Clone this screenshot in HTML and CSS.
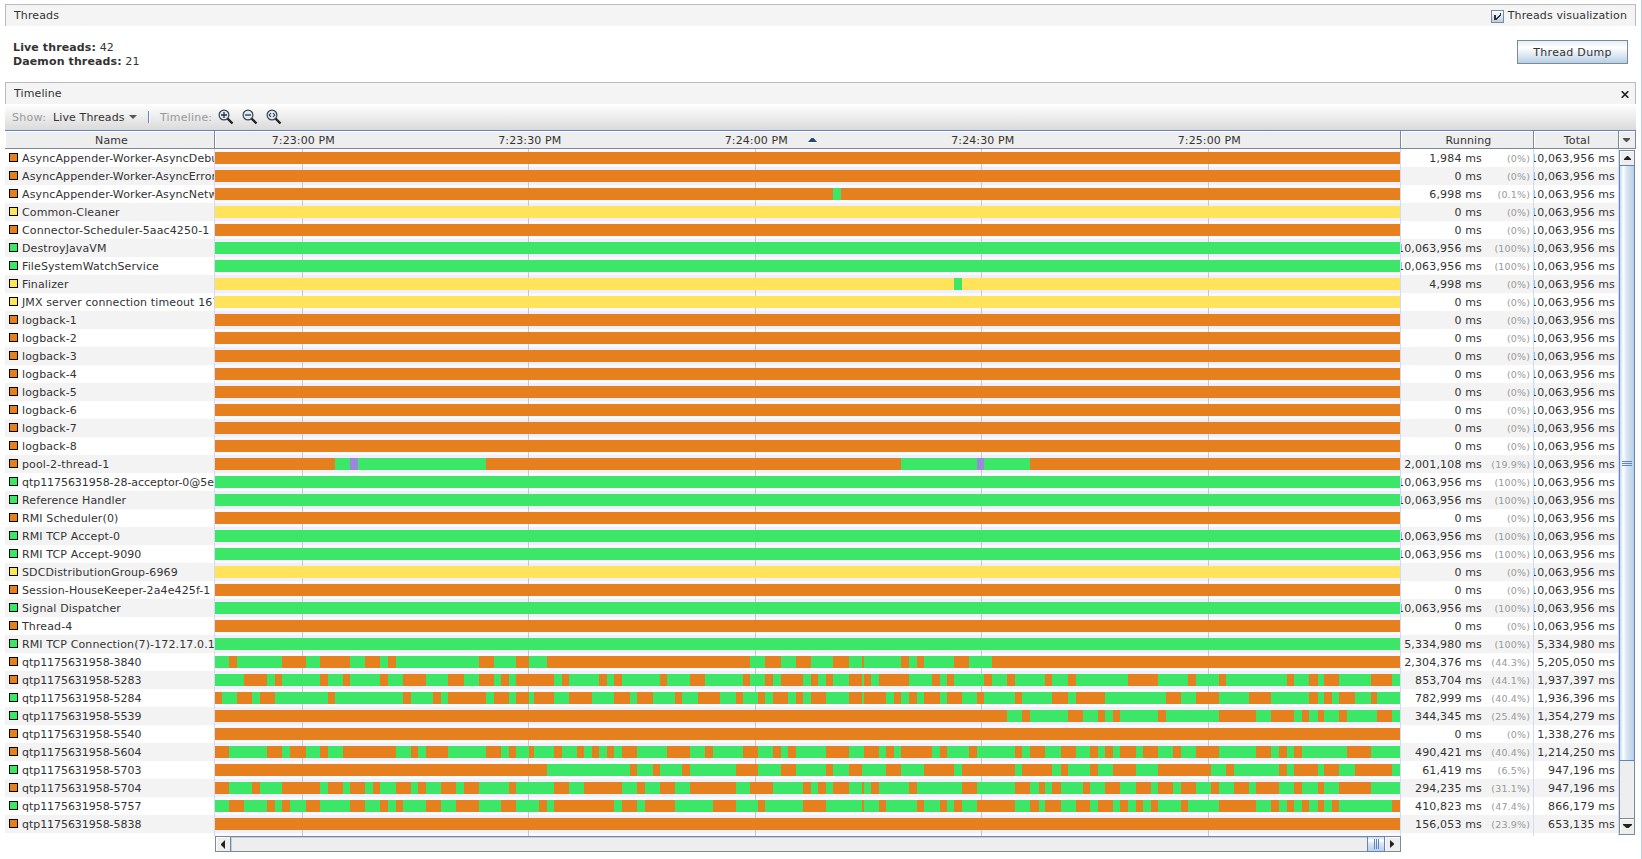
FILE: index.html
```
<!DOCTYPE html>
<html lang="en">
<head>
<meta charset="utf-8">
<title>Threads</title>
<link rel="stylesheet" href="styles.css">
</head>
<body>
<main class="app">
  <header class="bar">
    <span>Threads</span>
    <label class="check"><span class="box"><svg width="13" height="13" viewBox="0 0 13 13" shape-rendering="crispEdges"><path d="M3 5h2v5H3zM5 8h1v2H5zM6 7h1v2H6zM7 6h1v2H7zM8 5h1v2H8zM9 4h1v2H9zM9 3h1v1H9z" fill="#333"/></svg></span><span class="checktext">Threads visualization</span></label>
  </header>
  <section class="summary">
    <div class="stats"><div><b>Live threads:</b> 42</div><div><b>Daemon threads:</b> 21</div></div>
    <button class="dump">Thread Dump</button>
  </section>
  <header class="bar">
    <span>Timeline</span>
    <svg class="close" width="8" height="7" viewBox="0 0 8 7"><path d="M.7.2 7.3 6.800M7.300.2.7 6.800" stroke="#222" stroke-width="1.6"/></svg>
  </header>
  <div class="toolbar">
    <span class="dim show">Show:</span>
    <span class="live">Live Threads</span>
    <svg class="drop" width="8" height="4" viewBox="0 0 8 4"><path d="M0 0h8L4 4z" fill="#555"/></svg>
    <i class="divider"></i>
    <span class="dim tl">Timeline:</span>
    <svg class="lens" width="16" height="16" viewBox="0 0 16 16"><path d="m9.500 9.500 5 5" stroke="#222" stroke-width="2.4"/><circle cx="6" cy="6" r="4.900" fill="#dcebf8" stroke="#3c434b" stroke-width="1.2"/><path d="M3 6h6M6 3v6" stroke="#234" stroke-width="1.3"/></svg>
    <svg class="lens" width="16" height="16" viewBox="0 0 16 16"><path d="m9.500 9.500 5 5" stroke="#222" stroke-width="2.4"/><circle cx="6" cy="6" r="4.900" fill="#dcebf8" stroke="#3c434b" stroke-width="1.2"/><path d="M3 6h6" stroke="#234" stroke-width="1.3"/></svg>
    <svg class="lens" width="16" height="16" viewBox="0 0 16 16"><path d="m9.500 9.500 5 5" stroke="#222" stroke-width="2.4"/><circle cx="6" cy="6" r="4.900" fill="#dcebf8" stroke="#3c434b" stroke-width="1.2"/><path d="M5 4 3.200 6 5 8M7 4 8.800 6 7 8" fill="none" stroke="#234" stroke-width="1.100"/></svg>
  </div>
  <div class="table">
    <div class="main">
      <div class="head">
        <div class="th name-h">Name</div>
        <div class="th times"><span>7:23:00 PM</span><span>7:23:30 PM</span><span>7:24:00 PM</span><span>7:24:30 PM</span><span>7:25:00 PM</span><svg class="sort" width="9" height="5" viewBox="0 0 9 5"><path d="M0 4h9L5.500 0h-2z" fill="#234a6c"/><path d="M0 4.500h9" stroke="#fff"/></svg></div>
        <div class="th running-h">Running</div>
        <div class="th total-h">Total</div>
      </div>
      <div id="rows"></div>
      <div class="tail"><i></i><i></i><i></i><i></i></div>
    </div>
    <div class="side">
      <div class="corner"><svg width="7" height="4" viewBox="0 0 7 4"><path d="M0 0h7v1L4 4H3L0 1z" fill="#555"/></svg></div>
      <div class="vscroll">
        <div class="vbtn"><svg width="7" height="4" viewBox="0 0 7 4"><path d="M0 4h7V3L4 0H3L0 3z" fill="#222"/></svg></div>
        <div class="vthumb"><i></i><i></i><i></i></div>
        <div class="vtrack"></div>
        <div class="vbtn end"><svg width="9" height="4" viewBox="0 0 9 4"><path d="M0 0h9v1L5.500 4h-2L0 1z" fill="#222"/></svg></div>
      </div>
    </div>
  </div>
  <div class="hscroll">
    <div class="hbtn"><svg width="4" height="9" viewBox="0 0 4 9"><path d="M4 0v9L0 5V4z" fill="#222"/></svg></div>
    <div class="htrack"></div>
    <div class="hthumb"><i></i><i></i><i></i></div>
    <div class="hbtn right"><svg width="4" height="8" viewBox="0 0 4 8"><path d="M0 0v8l4-3.500v-1z" fill="#222"/></svg></div>
  </div>
</main>
<script src="threads.js"></script>
</body>
</html>
```

FILE: styles.css
```
* { box-sizing: border-box; }
body { margin: 0; background: #fff; color: #333; font: 11px/14px "DejaVu Sans", sans-serif; letter-spacing: .12px; }
.app { width: 1642px; height: 859px; padding: 4px 5px 0; border-right: 1px solid #b8cfe5; display: flex; flex-direction: column; overflow: hidden; white-space: nowrap; }
.bar { width: 1631px; height: 22px; flex: none; background: #f4f4f4; border: 1px solid #bbb; border-bottom: 0; display: flex; justify-content: space-between; align-items: center; padding: 1px 8px 0; }
.check { display: flex; align-items: center; gap: 4px; }
.checktext { letter-spacing: .14px; }
.box { width: 13px; height: 13px; border: 1px solid #7a8a99; background: linear-gradient(#fff, #b8cfe5); display: flex; }
.box svg { margin: -1px; flex: none; }
.summary { width: 1631px; height: 56px; flex: none; display: flex; justify-content: space-between; padding: 14px 8px 0 8px; }
.stats { padding-top: 1px; }
.dump { width: 111px; height: 24px; padding: 2px 0 0; border: 1px solid #7a8a99; background: linear-gradient(#e4edf6, #fff 30%, #b8cfe5); font: inherit; color: #333; letter-spacing: .3px; }
.close { margin-right: -2px; }
.toolbar { width: 1631px; height: 26px; flex: none; background: linear-gradient(#fff, #dadada); display: flex; align-items: center; padding-left: 7px; }
.toolbar span { padding-top: 1px; }
.dim { color: #999; }
.show { width: 41px; letter-spacing: .3px; }
.live { width: 76px; letter-spacing: .12px; }
.drop { width: 8px; }
.divider { width: 2px; height: 12px; border-left: 1px solid #6382bf; border-right: 1px solid #fff; margin: 0 10px 0 11px; }
.tl { width: 58px; letter-spacing: .2px; }
.lens { margin-right: 8px; }
.table { width: 1631px; height: 706px; flex: none; border-top: 1px solid #6382bf; display: flex; }
.main { width: 1614px; }
.head, .row, .tail { display: grid; grid-template-columns: 210px 1186px 133px 85px; }
.head { height: 18px; }
.th { background: #eee; border-right: 1px solid #7a8a99; border-bottom: 1px solid #7a8a99; box-shadow: inset 1px 1px #fff; text-align: center; line-height: 18px; padding-top: 1px; height: 18px; }
.name-h { padding-left: 4px; }
.running-h { padding-left: 3px; }
.total-h { padding-left: 2px; }
.times { display: grid; grid-template-columns: repeat(5, 226.500px); position: relative; letter-spacing: .1px; }
.times span { text-align: center; transform: translateX(-25px); }
.sort { position: absolute; left: 593px; top: 7px; }
.row { height: 18px; background: #fff; }
.row:nth-child(even) { background: #f3f3f3; }
.cell { border-right: 1px solid #d2dafa; overflow: hidden; height: 18px; line-height: 18px; }
.name { display: flex; align-items: center; padding-left: 4px; gap: 4px; }
.label { padding-top: 1px; }
.label.pool { letter-spacing: -.05px; }
.key { width: 9px; height: 9px; border: 1px solid #000; flex: none; margin-top: -1px; }
.track { padding: 3px 0; display: flex; background: repeating-linear-gradient(90deg, #c8c8c8 0 1px, transparent 1px 226.500px) 87px 0 / 1099px 18px no-repeat #fafafe; }
.row:nth-child(even) .track { background-color: #f0f0fa; }
.track i { height: 12px; flex: none; }
.o { background: #e67f1e; }
.g { background: #3ce768; }
.y { background: #ffe35a; }
.p { background: #9b87dc; }
.num { display: flex; justify-content: flex-end; padding-top: 1px; letter-spacing: .16px; }
.num .pct { width: 51px; text-align: right; color: #999; font-size: 9.500px; letter-spacing: .15px; padding-right: 3px; flex: none; }
.num .ms { flex: none; }
.total { padding-right: 3px; }
.tail { height: 3px; }
.tail i { border-right: 1px solid #d2dafa; }
.tail i:nth-child(2) { background: repeating-linear-gradient(90deg, #c8c8c8 0 1px, transparent 1px 226.500px) 87px 0 / 1099px 3px no-repeat #fafafe; }
.side { width: 17px; }
.corner { height: 18px; background: #eee; border-right: 1px solid #7a8a99; border-bottom: 1px solid #7a8a99; box-shadow: inset 1px 1px #fff; display: flex; align-items: center; justify-content: center; padding-right: 1px; }
.vscroll { height: 685px; border: 1px solid #7a8a99; margin-top: 1px; display: flex; flex-direction: column; width: 16px; }
.vbtn { height: 14px; background: #eee; box-shadow: inset 1px 1px #fff; display: flex; align-items: center; justify-content: center; }
.vbtn.end { height: 16px; border-top: 1px solid #7a8a99; padding-bottom: 1px; }
.vthumb { height: 596px; border: 1px solid #6382bf; margin: 0 -1px; background: linear-gradient(90deg, #c8dcef, #fff 25%, #dce8f3 45%, #b8cfe5); display: flex; flex-direction: column; align-items: center; justify-content: center; gap: 1px; }
.vthumb i { width: 10px; height: 1px; background: #6382bf; }
.vtrack { flex: 1; background: #eee; }
.hscroll { width: 1186px; height: 16px; flex: none; margin-left: 210px; border: 1px solid #7a8a99; display: flex; }
.hbtn { width: 14px; background: #eee; box-shadow: inset 1px 1px #fff; display: flex; align-items: center; justify-content: center; }
.hbtn.right { width: 15px; padding-right: 2px; }
.htrack { flex: 1; border-left: 1px solid #7a8a99; background: #eee; box-shadow: inset 1px 1px #b8cfe5; }
.hthumb { width: 18px; margin: -1px 0; border: 1px solid #6382bf; background: linear-gradient(#c8dcef, #fff 25%, #dce8f3 45%, #b8cfe5); display: flex; gap: 1px; align-items: center; justify-content: center; }
.hthumb i { width: 1px; height: 10px; background: #6382bf; }
```

FILE: threads.js
```
const START = 215, END = 1400, ALL = '10,063,956';

// name, key colour, running ms, percent, total ms, timeline.
// A timeline is either [state, end x] pairs, or a first state followed by
// the x at which each state ends, alternating between green and orange.
const threads = [
  ['AsyncAppender-Worker-AsyncDebug', 'o', '1,984', '0%', ALL],
  ['AsyncAppender-Worker-AsyncError', 'o', '0', '0%', ALL],
  ['AsyncAppender-Worker-AsyncNetwork', 'o', '6,998', '0.1%', ALL, [['o', 833], ['g', 841], ['o', END]]],
  ['Common-Cleaner', 'y', '0', '0%', ALL],
  ['Connector-Scheduler-5aac4250-1', 'o', '0', '0%', ALL],
  ['DestroyJavaVM', 'g', ALL, '100%', ALL],
  ['FileSystemWatchService', 'g', ALL, '100%', ALL],
  ['Finalizer', 'y', '4,998', '0%', ALL, [['y', 954], ['g', 962], ['y', END]]],
  ['JMX server connection timeout 167', 'y', '0', '0%', ALL],
  ...[1, 2, 3, 4, 5, 6, 7, 8].map(n => ['logback-' + n, 'o', '0', '0%', ALL]),
  ['pool-2-thread-1', 'o', '2,001,108', '19.9%', ALL, [['o', 335], ['g', 350], ['p', 358], ['g', 486], ['o', 901], ['g', 977], ['p', 984], ['g', 1030], ['o', END]]],
  ['qtp1175631958-28-acceptor-0@5e1', 'g', ALL, '100%', ALL],
  ['Reference Handler', 'g', ALL, '100%', ALL],
  ['RMI Scheduler(0)', 'o', '0', '0%', ALL],
  ['RMI TCP Accept-0', 'g', ALL, '100%', ALL],
  ['RMI TCP Accept-9090', 'g', ALL, '100%', ALL],
  ['SDCDistributionGroup-6969', 'y', '0', '0%', ALL],
  ['Session-HouseKeeper-2a4e425f-1', 'o', '0', '0%', ALL],
  ['Signal Dispatcher', 'g', ALL, '100%', ALL],
  ['Thread-4', 'o', '0', '0%', ALL],
  ['RMI TCP Connection(7)-172.17.0.1', 'g', '5,334,980', '100%', '5,334,980'],
  ['qtp1175631958-3840', 'o', '2,304,376', '44.3%', '5,205,050', 'g 229 237 282 306 320 350 365 380 388 396 479 494 516 529 547 750 765 781 796 811 833 849 862 864 901 909 917 924 954 969 992 1400'],
  ['qtp1175631958-5283', 'o', '853,704', '44.1%', '1,937,397', 'g 244 267 275 282 320 328 343 350 380 388 403 426 448 464 479 494 501 509 516 554 562 569 599 607 614 622 660 667 690 705 743 750 765 773 781 803 811 818 826 833 849 862 864 871 879 909 932 940 947 954 984 992 1007 1015 1045 1052 1068 1076 1128 1158 1188 1196 1219 1226 1287 1294 1309 1318 1324 1339 1371 1392 1400'],
  ['qtp1175631958-5284', 'g', '782,999', '40.4%', '1,936,396', 'o 222 237 252 260 275 328 335 403 411 433 441 448 486 494 509 516 529 534 554 569 592 614 630 637 653 675 682 698 720 736 743 758 765 773 788 796 803 811 826 849 862 864 886 894 901 909 917 924 940 947 962 977 984 1015 1022 1052 1068 1076 1105 1166 1181 1196 1219 1249 1271 1309 1318 1324 1332 1339 1355 1371 1377 1400'],
  ['qtp1175631958-5539', 'g', '344,345', '25.4%', '1,354,279', 'o 1007 1022 1030 1068 1083 1098 1105 1113 1120 1158 1166 1219 1256 1271 1294 1302 1309 1318 1324 1339 1347 1377 1392 1400'],
  ['qtp1175631958-5540', 'o', '0', '0%', '1,338,276'],
  ['qtp1175631958-5604', 'o', '490,421', '40.4%', '1,214,250', 'o 229 267 282 290 306 320 328 343 396 411 418 426 448 486 501 509 516 529 534 554 562 577 584 592 599 607 614 622 637 667 690 705 713 743 758 773 781 788 796 826 849 864 879 886 894 901 932 940 947 969 977 1015 1022 1030 1045 1061 1076 1090 1098 1105 1113 1120 1136 1143 1158 1173 1181 1196 1219 1256 1271 1279 1287 1294 1302 1347 1371 1400'],
  ['qtp1175631958-5703', 'g', '61,419', '6.5%', '947,196', 'o 547 630 637 653 660 682 690 736 758 781 796 826 833 849 862 886 901 924 954 962 1015 1022 1052 1061 1068 1090 1098 1113 1136 1158 1211 1226 1234 1279 1287 1294 1318 1324 1339 1355 1392 1400'],
  ['qtp1175631958-5704', 'o', '294,235', '31.1%', '947,196', 'o 229 252 260 282 320 328 343 350 365 373 380 396 411 418 426 441 456 464 479 509 516 554 569 584 622 637 645 660 675 690 736 750 773 803 811 818 826 833 849 862 864 871 879 909 917 962 977 1015 1030 1039 1045 1052 1061 1083 1090 1105 1120 1136 1151 1158 1173 1181 1196 1211 1219 1234 1249 1256 1279 1294 1302 1318 1324 1339 1371 1400'],
  ['qtp1175631958-5757', 'g', '410,823', '47.4%', '866,179', 'g 229 244 267 275 282 290 306 320 350 365 380 388 396 403 426 441 456 479 501 516 539 547 554 614 622 637 645 675 713 736 758 765 803 826 862 864 879 886 917 924 940 947 954 962 977 1015 1030 1039 1045 1061 1076 1090 1098 1113 1120 1128 1136 1143 1151 1158 1181 1188 1219 1256 1271 1279 1287 1294 1302 1309 1318 1324 1332 1339 1392 1400'],
  ['qtp1175631958-5838', 'o', '156,053', '23.9%', '653,135']
];

function expand(key, line) {
  if (!line) return [[key, END]];
  if (Array.isArray(line)) return line;
  const [first, ...ends] = line.split(' ');
  const other = first === 'g' ? 'o' : 'g';
  return ends.map((x, n) => [n % 2 ? other : first, Number(x)]);
}

document.getElementById('rows').innerHTML = threads.map(([name, key, ms, pct, total, line]) => {
  let x = START;
  const bars = expand(key, line).map(([state, end]) => {
    const bar = `<i class="${state}" style="width:${end - x}px"></i>`;
    x = end;
    return bar;
  }).join('');
  const label = name.startsWith('qtp') ? 'label pool' : 'label';
  return `<div class="row"><div class="cell name"><span class="key ${key}"></span><span class="${label}">${name}</span></div>` +
    `<div class="cell track">${bars}</div>` +
    `<div class="cell num"><span class="ms">${ms} ms</span><span class="pct">(${pct})</span></div>` +
    `<div class="cell num total"><span class="ms">${total} ms</span></div></div>`;
}).join('');
```
